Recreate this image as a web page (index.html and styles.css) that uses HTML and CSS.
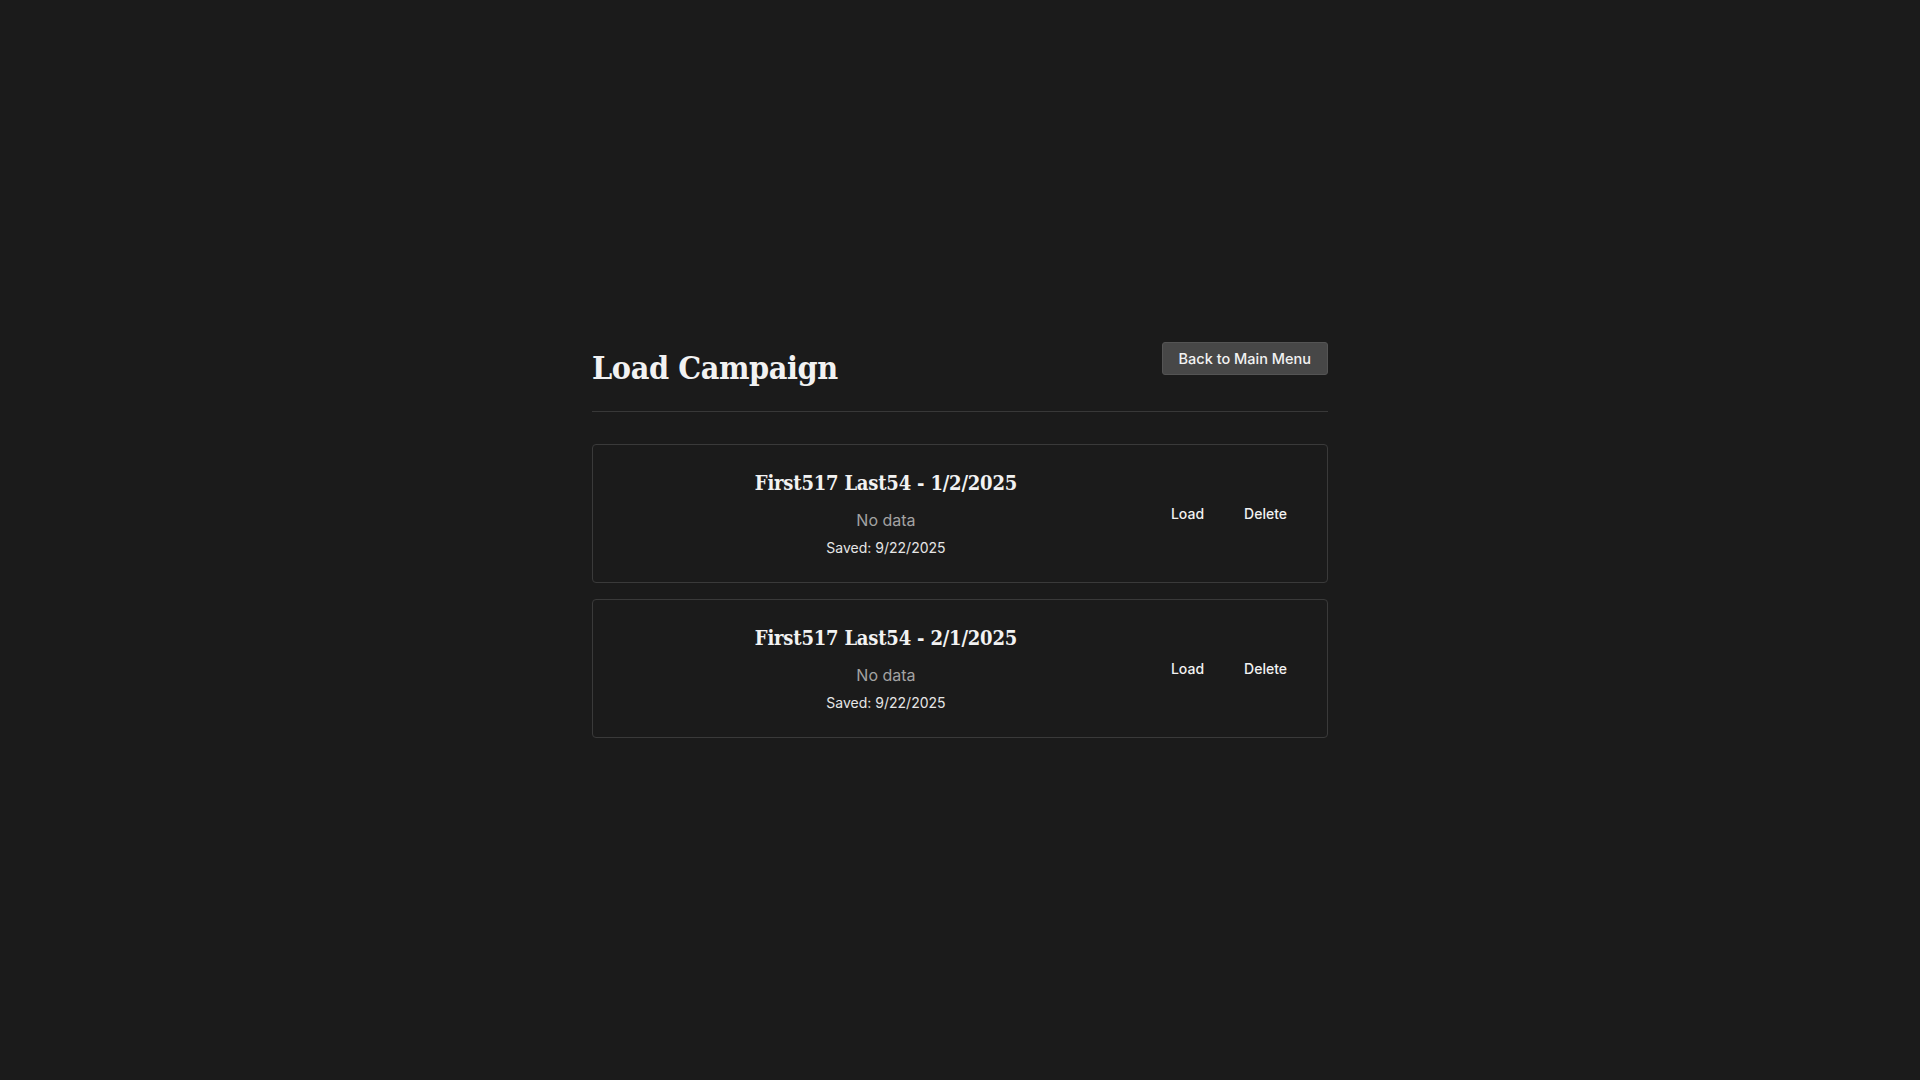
FILE: index.html
```html
<!DOCTYPE html>
<html>
<head>
<title>Load Campaign</title>
<link rel="stylesheet" href="styles.css">
</head>
<body>
  <div class="load-screen">
    <div class="header">
      <h1>Load Campaign</h1>
      <button class="back-btn">Back to Main Menu</button>
    </div>
    <div class="save-list">
      <div class="save-card">
        <div class="save-info">
          <h3>First517 Last54 - 1/2/2025</h3>
          <p class="summary">No data</p>
          <p class="saved">Saved: 9/22/2025</p>
        </div>
        <div class="save-actions">
          <button class="link-btn">Load</button>
          <button class="link-btn">Delete</button>
        </div>
      </div>
      <div class="save-card">
        <div class="save-info">
          <h3>First517 Last54 - 2/1/2025</h3>
          <p class="summary">No data</p>
          <p class="saved">Saved: 9/22/2025</p>
        </div>
        <div class="save-actions">
          <button class="link-btn">Load</button>
          <button class="link-btn">Delete</button>
        </div>
      </div>
    </div>
  </div>
</body>
</html>
```

FILE: styles.css
```css
body {
  margin: 0;
  font-family: Inter, "Noto Sans", sans-serif;
  background-color: #1b1b1b;
  color: #f2f2f2;
  display: flex;
  justify-content: center;
  align-items: center;
  min-height: 100vh;
}
.load-screen {
  width: 100%;
  max-width: 800px;
  padding: 2rem;
  box-sizing: border-box;
}
.header {
  display: flex;
  justify-content: space-between;
  align-items: flex-start;
  padding-bottom: 16px;
  border-bottom: 1px solid #383838;
  margin-bottom: 2rem;
}
.header h1 {
  margin: 0;
  font-family: "DejaVu Serif Condensed", "DejaVu Serif", serif;
  font-stretch: condensed;
  font-size: 32px;
  letter-spacing: -0.4px;
  line-height: 53px;
  font-weight: bold;
}
.back-btn {
  font-family: Inter, sans-serif;
  font-size: 14.5px;
  font-weight: 500;
  color: #f2f2f2;
  background-color: #474747;
  border: 1px solid #545454;
  border-radius: 3px;
  padding: 7px 16px;
  cursor: pointer;
}
.save-list {
  display: flex;
  flex-direction: column;
  gap: 16px;
}
.save-card {
  display: flex;
  align-items: center;
  padding: 24px;
  border: 1px solid #3a3a3a;
  border-radius: 4px;
}
.save-info {
  flex: 1;
  text-align: center;
}
.save-info h3 {
  margin: 0 0 11px;
  font-family: "DejaVu Serif Condensed", "DejaVu Serif", serif;
  font-stretch: condensed;
  font-size: 20px;
  letter-spacing: -0.2px;
  line-height: 28px;
  font-weight: bold;
}
.save-info .summary {
  margin: 0 0 5px;
  font-size: 16px;
  line-height: 1.5;
  color: #a3a3a3;
}
.save-info .saved {
  margin: 0;
  font-size: 14px;
  line-height: 1.5;
  color: #e6e6e6;
}
.save-actions {
  display: flex;
  gap: 8px;
}
.link-btn {
  font-family: Inter, sans-serif;
  font-size: 14px;
  font-weight: 500;
  color: #f2f2f2;
  background: none;
  border: none;
  padding: 8px 16px;
  cursor: pointer;
}
```
